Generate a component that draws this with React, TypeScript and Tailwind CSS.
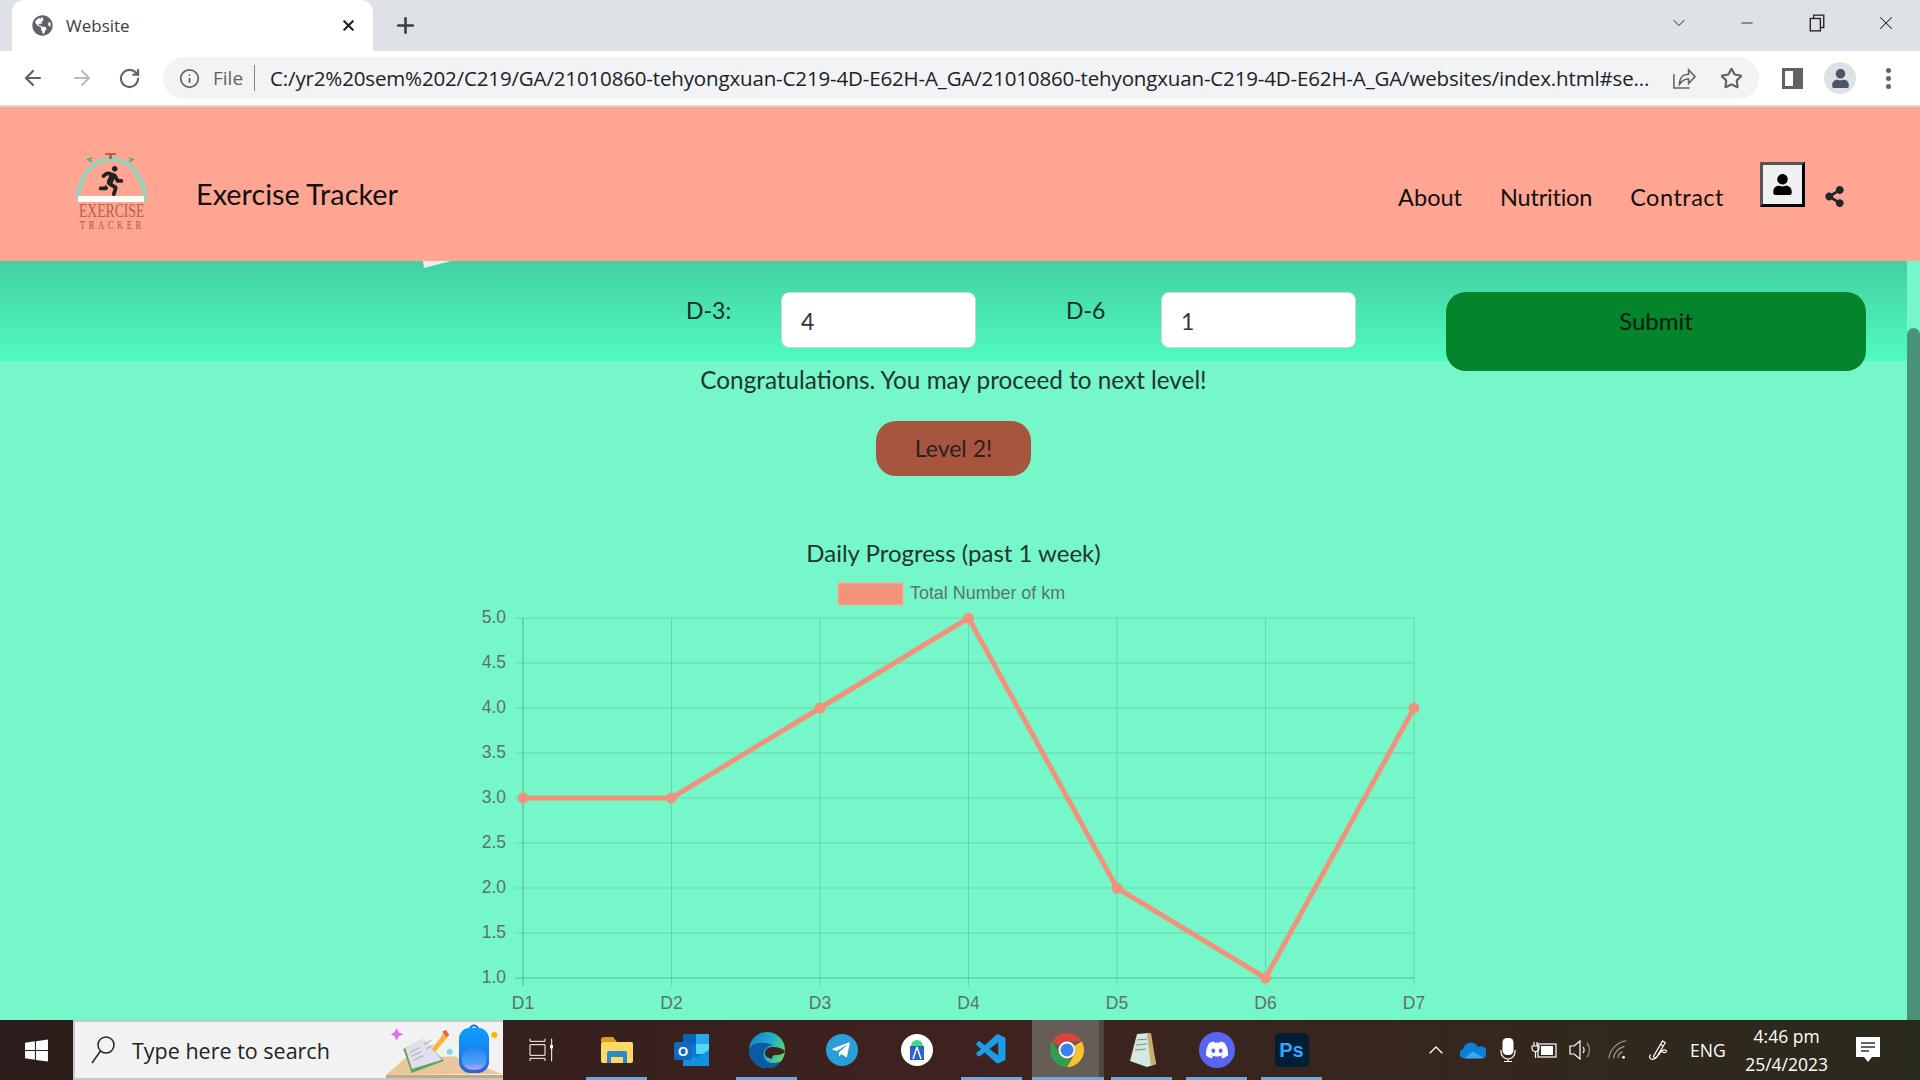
import { ArrowLeft, ArrowRight, RotateCw, Info, Star, Plus, X, ChevronDown, Minus, ChevronUp } from 'lucide-react';
import { FaGlobeAmericas, FaRunning, FaShareAlt, FaUser, FaTelegramPlane, FaDiscord } from 'react-icons/fa';
import { VscVscode } from 'react-icons/vsc';

const xLabels = ['D1', 'D2', 'D3', 'D4', 'D5', 'D6', 'D7'];
const yLabels = ['5.0', '4.5', '4.0', '3.5', '3.0', '2.5', '2.0', '1.5', '1.0'];
const values = [3, 3, 4, 5, 2, 1, 4];

const plotX = (i: number) => 523 + i * 148.5;
const plotY = (v: number) => 618 + (5 - v) * 90;

function ProgressChart() {
  const points = values.map((v, i) => `${plotX(i)},${plotY(v)}`).join(' ');
  return (
    <svg viewBox="474 575 960 445" className="mt-[7px] h-[445px] w-[960px] shrink-0" fontFamily="'Liberation Sans', Arial, sans-serif">
      <rect x="838" y="583" width="65" height="22" fill="#f2927b" stroke="#f7b09e" strokeWidth="1" />
      <text x="910" y="599" fontSize="17.9" fill="#5e7169">Total Number of km</text>
      {yLabels.map((label, i) => {
        const y = 618 + i * 45;
        return (
          <g key={label}>
            <line x1="515" x2="1414" y1={y} y2={y} stroke="#000" strokeOpacity={i === 8 ? 0.25 : 0.13} strokeWidth="1" />
            <text x="506" y={y + 5} fontSize="17.5" textAnchor="end" fill="#5e7169">{label}</text>
          </g>
        );
      })}
      {xLabels.map((label, i) => (
        <g key={label}>
          <line x1={plotX(i)} x2={plotX(i)} y1="618" y2="986" stroke="#000" strokeOpacity={i === 0 ? 0.28 : 0.13} strokeWidth="1" />
          <text x={plotX(i)} y="1009" fontSize="17.5" textAnchor="middle" fill="#5e7169">{label}</text>
        </g>
      ))}
      <polyline points={points} fill="none" stroke="#f2927b" strokeWidth="5" />
      {values.map((v, i) => (
        <circle key={i} cx={plotX(i)} cy={plotY(v)} r="5.5" fill="#f2927b" />
      ))}
    </svg>
  );
}

function Logo() {
  return (
    <svg viewBox="75 150 72 82" className="h-[82px] w-[72px] shrink-0">
      <path d="M78 201 C78 178 92 159 111 159 C130 159 145 178 145 201" fill="none" stroke="#8dd6bb" strokeWidth="4" />
      <path d="M105 153h11v2h-4v4h-3v-4h-4z" fill="#b9604a" />
      <path d="M92 158l-4 1.500 4 2.500M129 158l4 1.500-4 2.500" fill="none" stroke="#3fae82" strokeWidth="1.500" />
      <rect x="78" y="196" width="66" height="6" fill="#fff" />
      <text transform="translate(79 217) scale(0.72 1)" fontFamily="'Liberation Serif', serif" fontSize="19" fill="#b9604a">EXERCISE</text>
      <text transform="translate(80 229) scale(0.7 1)" fontFamily="'Liberation Serif', serif" fontSize="12" letterSpacing="5.200" fill="#a05a4a">TRACKER</text>
      <foreignObject x="96" y="166" width="32" height="32">
        <FaRunning className="h-[30px] w-[30px] text-[#222]" />
      </foreignObject>
    </svg>
  );
}

function BrowserChrome() {
  return (
    <div className="shrink-0 font-['Open_Sans','Noto_Sans',sans-serif]">
      <div className="flex h-[51px] items-end bg-[#dee1e6]">
        <div className="ml-[12px] flex h-[51px] w-[361px] items-center rounded-t-[12px] bg-white pl-[20px] pr-[16px]">
          <FaGlobeAmericas className="h-[21px] w-[21px] text-[#5f6368]" />
          <span className="ml-[13px] text-[17px] text-[#3c4043]">Website</span>
          <X className="ml-auto h-[17px] w-[17px] text-[#202124]" strokeWidth={3} />
        </div>
        <Plus className="mb-[13px] ml-[20px] h-[25px] w-[25px] text-[#3c4043]" strokeWidth={2.500} />
        <div className="mb-[17px] ml-auto flex items-center text-[#202124]">
          <ChevronDown className="h-[20px] w-[20px]" strokeWidth={1.200} />
          <Minus className="ml-[49px] h-[18px] w-[18px]" strokeWidth={1.200} />
          <svg viewBox="0 0 16 16" className="ml-[52px] h-[18px] w-[18px]" fill="none" stroke="currentColor" strokeWidth="1.200"><rect x="2" y="4" width="9" height="11" /><path d="M5 4V1h9v11h-3" /></svg>
          <X className="ml-[49px] mr-[23px] h-[22px] w-[22px]" strokeWidth={1.100} />
        </div>
      </div>
      <div className="flex h-[56px] items-center border-b-[2px] border-[#d9d9d9] bg-white">
        <ArrowLeft className="ml-[21px] h-[24px] w-[24px] shrink-0 text-[#5f6368]" strokeWidth={2.200} />
        <ArrowRight className="ml-[25px] h-[24px] w-[24px] shrink-0 text-[#babcbe]" strokeWidth={2.200} />
        <RotateCw className="ml-[24px] h-[23px] w-[23px] shrink-0 text-[#5f6368]" strokeWidth={2.200} />
        <div className="ml-[22px] flex h-[42px] w-[1596px] shrink-0 items-center rounded-full bg-[#f1f3f4] pl-[16px] pr-[16px]">
          <Info className="h-[21px] w-[21px] shrink-0 text-[#5f6368]" />
          <span className="ml-[13px] text-[19px] text-[#5f6368]">File</span>
          <div className="ml-[11px] h-[26px] w-[1px] shrink-0 bg-[#80868b]" />
          <span className="ml-[15px] whitespace-nowrap text-[20.500px] tracking-[-0.150px] text-[#202124]">C:/yr2%20sem%202/C219/GA/21010860-tehyongxuan-C219-4D-E62H-A_GA/21010860-tehyongxuan-C219-4D-E62H-A_GA/websites/index.html#se...</span>
          <svg viewBox="0 0 26 24" className="ml-auto h-[22px] w-[24px] shrink-0 text-[#5f6368]" fill="none" stroke="currentColor" strokeWidth="1.700"><path d="M2 8v15h17" /><path d="M8 19c0-7 4-11 10-11V3l7 7.500-7 7.500v-5c-4 0-7 1-10 6z" /></svg>
          <Star className="ml-[24px] h-[23px] w-[23px] shrink-0 text-[#5f6368]" strokeWidth={2.200} />
        </div>
        <div className="ml-[23px] h-[21px] w-[21px] shrink-0 border-[3px] border-r-[10px] border-[#5f6368]" />
        <div className="ml-[21px] flex h-[32px] w-[32px] shrink-0 items-center justify-center rounded-full bg-[#dee1e6]">
          <FaUser className="h-[19px] w-[19px] text-[#4a5568]" />
        </div>
        <div className="ml-[30px] flex shrink-0 flex-col gap-[3px]">
          <div className="h-[5px] w-[5px] rounded-full bg-[#5f6368]" />
          <div className="h-[5px] w-[5px] rounded-full bg-[#5f6368]" />
          <div className="h-[5px] w-[5px] rounded-full bg-[#5f6368]" />
        </div>
      </div>
    </div>
  );
}

function SiteHeader() {
  return (
    <header className="flex h-[154px] shrink-0 items-center bg-[#ffa591] font-['Lato',sans-serif] text-[#111]">
      <div className="ml-[75px] mt-[13px]"><Logo /></div>
      <span className="ml-[49px] mt-[21px] text-[28.800px]">Exercise Tracker</span>
      <nav className="ml-auto mt-[14px] flex items-center text-[23.500px]">
        <a className="mt-[14px]">About</a>
        <a className="ml-[38px] mt-[14px] tracking-[-0.200px]">Nutrition</a>
        <a className="ml-[38px] mt-[14px] tracking-[0.500px]">Contract</a>
        <button className="ml-[36px] mb-[14px] flex h-[45px] w-[45px] items-center justify-center border-[3px] border-b-black border-l-[#555] border-r-black border-t-[#555] bg-[#f0f0f0]">
          <FaUser className="h-[21px] w-[21px] text-black" />
        </button>
        <FaShareAlt className="ml-[19px] mr-[75px] mt-[10px] h-[21px] w-[21px] text-[#212529]" />
      </nav>
    </header>
  );
}

function DayField({ label, value }: { label: string; value: string }) {
  return (
    <div className="flex">
      <label className="w-[95px] pt-[1px] text-[23px] text-[#1f2a2a]">{label}</label>
      <div className="flex h-[56px] w-[195px] items-center rounded-[8px] border border-[#ced4da] bg-white pl-[19px] pt-[2px] text-[23px] text-[#333]">{value}</div>
    </div>
  );
}

function MainContent() {
  return (
    <main className="relative flex min-w-0 flex-1 flex-col items-center overflow-hidden font-['Lato',sans-serif]">
      <section className="flex h-[100px] w-full shrink-0 gap-[90px] bg-gradient-to-b from-[#43d0a0] to-[#50fbc0] pl-[686px] pt-[31px]">
        <DayField label="D-3:" value="4" />
        <DayField label="D-6" value="1" />
        <button className="h-[79px] w-[420px] rounded-[20px] bg-[#04852c] pb-[22px] text-[24px] text-[#0a1a10]">Submit</button>
      </section>
      <svg viewBox="0 0 28 7" className="absolute left-[423px] top-0 h-[7px] w-[28px]"><polygon points="0,0 28,0 1,7" fill="#ececf2" /></svg>
      <p className="flex h-[38px] shrink-0 items-center text-[24.300px] text-[#24332f]">Congratulations. You may proceed to next level!</p>
      <button className="mt-[22px] h-[55px] w-[155px] shrink-0 rounded-[20px] bg-[#a7553e] text-[23px] text-[#2a2020]">Level 2!</button>
      <h2 className="mt-[62px] flex h-[30px] shrink-0 items-center text-[24px] text-[#24332f]">Daily Progress (past 1 week)</h2>
      <ProgressChart />
    </main>
  );
}

function Scrollbar() {
  return (
    <div className="w-[13px] shrink-0 pt-[67px]">
      <div className="h-full rounded-t-full bg-[#4a937a]" />
    </div>
  );
}

function TaskSlot({ children, open }: { children: React.ReactNode; open?: boolean }) {
  return (
    <div className="relative flex h-[60px] w-[75px] shrink-0 items-center justify-center">
      {children}
      {open && <div className="absolute bottom-0 left-[7px] right-[7px] h-[3px] bg-[#6aa9e0]" />}
    </div>
  );
}

function SearchArt() {
  // coordinates follow the picture at 3x
  return (
    <svg viewBox="18 6 351 174" className="ml-auto h-[58px] w-[117px] shrink-0">
      <defs>
        <linearGradient id="bagFill" x1="0" x2="0" y1="0" y2="1"><stop offset="0" stopColor="#0aa0ff" /><stop offset="1" stopColor="#2a62d8" /></linearGradient>
        <linearGradient id="pocketFill" x1="0" x2="0" y1="0" y2="1"><stop offset="0" stopColor="#2a86f0" /><stop offset="0.7" stopColor="#4aa0f8" /><stop offset="1" stopColor="#d89af0" /></linearGradient>
      </defs>
      <polygon points="18,168 75,118 220,112 368,165" fill="#e8c79c" />
      <rect x="18" y="168" width="351" height="12" fill="#c9a682" />
      <polygon points="70,90 130,60 192,125 95,162" fill="#5aa35a" />
      <polygon points="76,88 130,58 186,122 96,150" fill="#e3dfea" />
      <path d="M90 100l30-14M94 112l30-14M100 124l30-14M132 76l22-12M138 90l22-12" stroke="#a9a4b4" strokeWidth="3" />
      <polygon points="155,90 192,42 205,52 166,98" fill="#f6b53a" />
      <polygon points="186,38 198,33 208,48 200,54" fill="#ee5c4a" />
      <polygon points="50,26 56,40 70,46 56,52 50,66 44,52 32,46 44,40" fill="#d873ea" />
      <circle cx="209" cy="98" r="9" fill="#78dcec" />
      <circle cx="343" cy="48" r="9" fill="#f8b400" />
      <path d="M268 30q14-22 28 0" fill="none" stroke="#1f60c0" strokeWidth="5" />
      <rect x="237" y="26" width="90" height="136" rx="34" fill="url(#bagFill)" />
      <rect x="245" y="88" width="75" height="64" rx="30" fill="url(#pocketFill)" />
    </svg>
  );
}

function Taskbar() {
  return (
    <footer className="flex h-[60px] shrink-0 items-center bg-gradient-to-r from-[#2b1d1b] via-[#3f221f] to-[#2a2a1c] font-['Open_Sans','Noto_Sans',sans-serif] text-white">
      <div className="flex w-[73px] shrink-0 justify-center">
        <svg viewBox="0 0 24 24" className="h-[25px] w-[25px]" fill="#fff"><path d="M1 4.500l9.500-1.300v8.300H1zM11.500 3L23 1.500v10H11.500zM1 12.500h9.500v8.300L1 19.500zM11.500 12.500H23v10L11.500 21z" /></svg>
      </div>
      <div className="flex h-[60px] w-[430px] shrink-0 items-center overflow-hidden border-y-[2px] border-l-[2px] border-[#c8c8c8] bg-[#f2f2f2] text-[#222]">
        <svg viewBox="0 0 26 30" className="ml-[15px] h-[30px] w-[26px] shrink-0" fill="none" stroke="#222" strokeWidth="1.500"><circle cx="16" cy="10" r="8" /><path d="M10.500 16L2 28" /></svg>
        <span className="ml-[16px] mt-[2px] whitespace-nowrap text-[21.500px]">Type here to search</span>
        <SearchArt />
      </div>
      <div className="flex w-[76px] shrink-0 justify-center">
        <svg viewBox="443 53 72 72" className="h-[24px] w-[24px]" fill="none" stroke="#fff" strokeWidth="3"><path d="M446 55v8h45v-8M446 122v-8h45v8M446 73h45v32h-45zM511 55v68" /><rect x="506" y="74" width="10" height="10" fill="#fff" stroke="none" /></svg>
      </div>
      <TaskSlot open>
        <svg viewBox="0 0 32 26" className="h-[26px] w-[32px]"><path d="M0 3q0-3 3-3h9l4 5H0z" fill="#d99f16" /><rect x="0" y="5" width="32" height="21" rx="2" fill="#fdd866" /><path d="M6 26V16q0-2 2-2h16q2 0 2 2v10h-4v-6H10v6z" fill="#2d8ac6" /></svg>
      </TaskSlot>
      <TaskSlot>
        <svg viewBox="0 0 36 32" className="h-[32px] w-[36px]">
          <rect x="9" y="0" width="26" height="32" rx="2" fill="#0a78d4" />
          <rect x="9" y="0" width="13" height="10" fill="#0364b8" />
          <rect x="22" y="0" width="13" height="10" fill="#28a8ea" />
          <rect x="22" y="10" width="13" height="10" fill="#50d9ff" />
          <polygon points="9,18 22,24 35,16 35,32 9,32" fill="#1490df" />
          <rect x="0" y="8" width="18" height="18" rx="2" fill="#0f6cbd" />
          <text x="9" y="22" fontSize="13" fontWeight="700" textAnchor="middle" fill="#fff" fontFamily="'Liberation Sans', sans-serif">O</text>
        </svg>
      </TaskSlot>
      <TaskSlot open>
        <svg viewBox="0 0 36 36" className="h-[36px] w-[36px]">
          <defs><linearGradient id="edgeTop" x1="0" x2="1" y1="0.300" y2="0.700"><stop offset="0" stopColor="#1088cc" /><stop offset="0.550" stopColor="#23b0c8" /><stop offset="1" stopColor="#6cdc60" /></linearGradient></defs>
          <circle cx="18" cy="18" r="18" fill="url(#edgeTop)" />
          <path d="M0 18c0 10 8 18 18 18 6 0 11-2 14-7-7 4-15 2-17-4-2-6 2-11 9-12C17 10 3 9 0 18z" fill="#0c59a4" />
          <path d="M16 22c0-5 3-7 8-7 5 0 9 1 12 4-1 3-5 4-9 4-3 0-4 1-4 4-4-1-7-3-7-5z" fill="#3d2220" />
        </svg>
      </TaskSlot>
      <TaskSlot>
        <div className="flex h-[32px] w-[32px] items-center justify-center rounded-full bg-[#2a9fd6]">
          <FaTelegramPlane className="mr-[2px] h-[20px] w-[20px] text-white" />
        </div>
      </TaskSlot>
      <TaskSlot>
        <div className="flex h-[32px] w-[32px] items-center justify-center rounded-full bg-white">
          <svg viewBox="0 0 20 24" className="h-[24px] w-[20px]"><path d="M4 8a6 6 0 0 1 12 0z" fill="#3ddc84" /><rect x="3" y="8" width="14" height="14" fill="#2f62c8" /><path d="M10 9L6 21M10 9l4 12" stroke="#fff" strokeWidth="1.400" fill="none" /></svg>
        </div>
      </TaskSlot>
      <TaskSlot open>
        <VscVscode className="h-[36px] w-[36px] text-[#1c9ce8]" />
      </TaskSlot>
      <div className="relative ml-[3px] flex h-[60px] w-[72px] shrink-0 items-center justify-center">
        <div className="absolute inset-y-0 left-0 w-[67px] bg-[#665e56]" />
        <div className="absolute inset-y-0 right-0 w-[5px] bg-[#4d463f]" />
        <div className="absolute bottom-0 left-0 right-0 h-[3px] bg-[#6aa9e0]" />
        <svg viewBox="0 0 36 36" className="relative mr-[3px] h-[36px] w-[36px]">
          <path d="M18 1a17 17 0 0 1 14.700 8.500H18a8.500 8.500 0 0 0-7.400 4.200L3.300 9.500A17 17 0 0 1 18 1z" fill="#db4437" />
          <path d="M32.700 9.500A17 17 0 0 1 18 35l7.400-12.800a8.500 8.500 0 0 0 0-8.500z" fill="#fbc02d" />
          <path d="M18 35A17 17 0 0 1 3.300 9.500l7.300 12.700a8.500 8.500 0 0 0 7.400 4.300l3.500.000z" fill="#2e9e4f" />
          <circle cx="18" cy="18" r="8.500" fill="#fff" /><circle cx="18" cy="18" r="6.500" fill="#3b82e8" />
        </svg>
      </div>
      <TaskSlot open>
        <svg viewBox="0 0 30 36" className="h-[36px] w-[30px]"><polygon points="10,2 22,1 29,32 20,35 3,29" fill="#d4e8e0" /><polygon points="20,2 24,1 29,32 24,34" fill="#c8b06a" /><path d="M10 8l10-1M9 13l11-1M8 18l11-1" stroke="#6c8f93" strokeWidth="1" /></svg>
      </TaskSlot>
      <TaskSlot open>
        <div className="flex h-[36px] w-[36px] items-center justify-center rounded-full bg-[#5865f2]">
          <FaDiscord className="h-[24px] w-[24px] text-white" />
        </div>
      </TaskSlot>
      <TaskSlot open>
        <div className="flex h-[34px] w-[34px] items-center justify-center rounded-[5px] bg-[#001e36] font-['Liberation_Sans',sans-serif] text-[20px] font-bold text-[#31a8ff]">Ps</div>
      </TaskSlot>
      <div className="ml-[95px] flex items-center">
        <ChevronUp className="h-[24px] w-[24px] shrink-0" strokeWidth={1.300} />
        <svg viewBox="0 0 26 18" className="ml-[12px] h-[18px] w-[26px] shrink-0">
          <path d="M2 17a5 5 0 0 1 1-9 8 8 0 0 1 15-2 6 6 0 0 1 6 11z" fill="#0b7ed6" />
          <path d="M4 17.500l9-7 11 7z" fill="#3ba7ee" />
        </svg>
        <svg viewBox="0 0 16 24" className="ml-[14px] h-[24px] w-[16px] shrink-0" fill="none" stroke="#fff" strokeWidth="1.200">
          <rect x="2.500" y="0" width="11" height="17" rx="4.500" fill="#fff" stroke="none" />
          <path d="M1 12v2a7 7 0 0 0 14 0v-2M8 21v2M4 23.500h8" />
        </svg>
        <svg viewBox="0 0 26 18" className="ml-[15px] h-[18px] w-[26px] shrink-0" fill="none" stroke="#fff" strokeWidth="1.200">
          <rect x="7" y="3" width="18" height="13" />
          <rect x="10" y="5" width="12" height="9" fill="#fff" stroke="none" />
          <path d="M1 5h7v2a3 3 0 0 1-7 0zM3 1v4M6 1v4M4.500 10v7" />
        </svg>
        <svg viewBox="0 0 24 22" className="ml-[12px] h-[22px] w-[24px] shrink-0" fill="none" stroke="#fff" strokeWidth="1.200">
          <path d="M1 7h4l6-5v18l-6-5H1z" />
          <path d="M14 8a5 5 0 0 1 0 6" />
          <path d="M18 4a11 11 0 0 1 0 14" stroke="#9a9a90" />
        </svg>
        <svg viewBox="0 0 24 24" className="ml-[14px] h-[22px] w-[22px] shrink-0" fill="none" stroke="#9a9a90" strokeWidth="1.300"><path d="M2 21C3 12 11 3 21 2M7 21c1-6 5-11 12-13M12 21c0-3 2-6 5-7" /><circle cx="18" cy="20" r="1.500" fill="#fff" stroke="none" /></svg>
        <svg viewBox="0 0 22 24" className="ml-[19px] h-[22px] w-[20px] shrink-0" fill="none" stroke="#fff" strokeWidth="1.300"><path d="M16 2l3 2-9 15c-1 2-4 2-4 0zM14 6l3 2M3 17c-3 3 0 6 3 5 4-1 6-6 9-9 3-2 6-1 5 1-1 1-3 1-5 0" /></svg>
        <span className="ml-[22px] text-[17.500px]">ENG</span>
        <div className="ml-[19px] flex w-[84px] shrink-0 flex-col items-center gap-[6px] text-[17.500px] leading-[22px]">
          <span>4:46 pm</span>
          <span className="whitespace-nowrap">25/4/2023</span>
        </div>
        <svg viewBox="0 0 24 26" className="ml-[27px] h-[26px] w-[24px] shrink-0"><path d="M0 0h24v20h-8l-4 5-4-5H0z" fill="#fff" /><path d="M5 6h14M5 10h14M5 14h8" stroke="#333" strokeWidth="1.500" /></svg>
      </div>
    </footer>
  );
}

export default function App() {
  return (
    <div className="flex h-screen w-screen flex-col overflow-hidden bg-[#76f7c9]">
      <BrowserChrome />
      <SiteHeader />
      <div className="flex min-h-0 flex-1">
        <MainContent />
        <Scrollbar />
      </div>
      <Taskbar />
    </div>
  );
}
